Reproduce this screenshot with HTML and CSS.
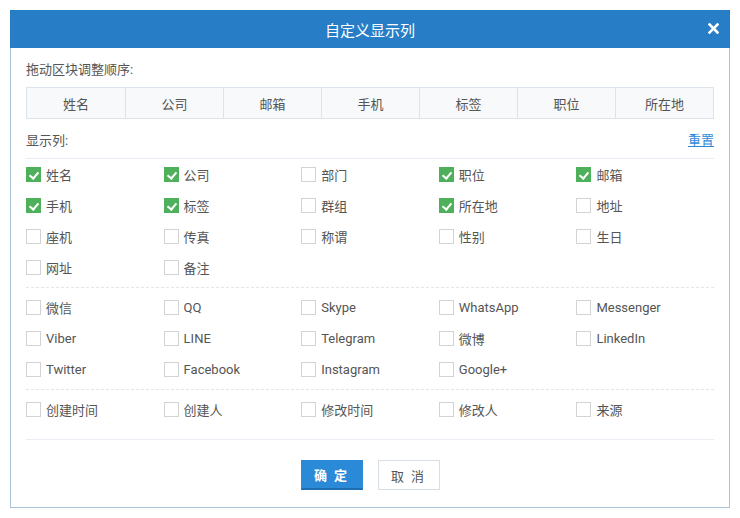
FILE: index.html
```html
<!DOCTYPE html>
<html lang="zh">
<head>
<meta charset="utf-8">
<link rel="stylesheet" href="styles.css">
</head>
<body>
<div class="dialog">
  <div class="dlg-header">
    <span class="dlg-title">自定义显示列</span>
    <span class="dlg-close"><svg width="11" height="11" viewBox="0 0 11 11"><path d="M1.5 1.5L9.5 9.5M9.5 1.5L1.5 9.5" stroke="#fff" stroke-width="2.6" stroke-linecap="square"/></svg></span>
  </div>
  <div class="dlg-body">
    <div class="label">拖动区块调整顺序:</div>
    <div class="sort-strip">
      <div class="sort-cell">姓名</div>
      <div class="sort-cell">公司</div>
      <div class="sort-cell">邮箱</div>
      <div class="sort-cell">手机</div>
      <div class="sort-cell">标签</div>
      <div class="sort-cell">职位</div>
      <div class="sort-cell">所在地</div>
    </div>
    <div class="cols-head">
      <span class="label">显示列:</span>
      <a class="reset">重置</a>
    </div>
    <div class="group first">
      <label class="item"><span class="cb on"></span>姓名</label>
      <label class="item"><span class="cb on"></span>公司</label>
      <label class="item"><span class="cb"></span>部门</label>
      <label class="item"><span class="cb on"></span>职位</label>
      <label class="item"><span class="cb on"></span>邮箱</label>
      <label class="item"><span class="cb on"></span>手机</label>
      <label class="item"><span class="cb on"></span>标签</label>
      <label class="item"><span class="cb"></span>群组</label>
      <label class="item"><span class="cb on"></span>所在地</label>
      <label class="item"><span class="cb"></span>地址</label>
      <label class="item"><span class="cb"></span>座机</label>
      <label class="item"><span class="cb"></span>传真</label>
      <label class="item"><span class="cb"></span>称谓</label>
      <label class="item"><span class="cb"></span>性别</label>
      <label class="item"><span class="cb"></span>生日</label>
      <label class="item"><span class="cb"></span>网址</label>
      <label class="item"><span class="cb"></span>备注</label>
    </div>
    <div class="group">
      <label class="item"><span class="cb"></span>微信</label>
      <label class="item"><span class="cb"></span>QQ</label>
      <label class="item"><span class="cb"></span>Skype</label>
      <label class="item"><span class="cb"></span>WhatsApp</label>
      <label class="item"><span class="cb"></span>Messenger</label>
      <label class="item"><span class="cb"></span>Viber</label>
      <label class="item"><span class="cb"></span>LINE</label>
      <label class="item"><span class="cb"></span>Telegram</label>
      <label class="item"><span class="cb"></span>微博</label>
      <label class="item"><span class="cb"></span>LinkedIn</label>
      <label class="item"><span class="cb"></span>Twitter</label>
      <label class="item"><span class="cb"></span>Facebook</label>
      <label class="item"><span class="cb"></span>Instagram</label>
      <label class="item"><span class="cb"></span>Google+</label>
    </div>
    <div class="group last">
      <label class="item"><span class="cb"></span>创建时间</label>
      <label class="item"><span class="cb"></span>创建人</label>
      <label class="item"><span class="cb"></span>修改时间</label>
      <label class="item"><span class="cb"></span>修改人</label>
      <label class="item"><span class="cb"></span>来源</label>
    </div>
    <div class="footer">
      <button class="btn primary">确 定</button>
      <button class="btn">取 消</button>
    </div>
  </div>
</div>
</body>
</html>
```
FILE: styles.css
```css
* { box-sizing: border-box; }
html, body { margin: 0; padding: 0; background: #fff; }
body {
  font-family: Roboto, "Noto Sans CJK SC", sans-serif;
  font-size: 13px;
  color: #555;
}
.dialog {
  margin: 10px 0 0 10px;
  width: 720px;
  height: 498px;
  border: 1px solid #a9c3dc;
  border-top: none;
  background: #fff;
}
.dlg-header {
  height: 38px;
  margin: 0 -1px;
  background: #277dc6;
  display: flex;
  align-items: center;
  justify-content: center;
  position: relative;
}
.dlg-title {
  color: #fff;
  font-size: 15px;
}
.dlg-close {
  position: absolute;
  right: 11px;
  top: 13px;
  display: flex;
}
.dlg-body {
  padding: 0 15px;
}
.label {
  line-height: 20px;
  color: #555;
}
.dlg-body > .label {
  margin-top: 12px;
}
.sort-strip {
  margin-top: 7px;
  display: grid;
  grid-template-columns: repeat(7, 1fr);
  border: 1px solid #dde3ea;
  background: #f7f9fb;
  height: 32px;
}
.sort-cell {
  display: flex;
  align-items: center;
  justify-content: center;
  border-left: 1px solid #dde3ea;
  color: #555;
}
.sort-cell:first-child { border-left: none; }
.cols-head {
  margin-top: 12px;
  display: flex;
  justify-content: space-between;
  align-items: center;
  padding-bottom: 7px;
  border-bottom: 1px solid #e8eef4;
}
.reset {
  color: #2b8ad8;
  text-decoration: underline;
  line-height: 20px;
  cursor: pointer;
}
.group {
  display: grid;
  grid-template-columns: repeat(5, 1fr);
  grid-auto-rows: 31px;
  padding: 4px 0 4px;
  border-top: 1px dashed #dfe6ee;
}
.group.first {
  border-top: none;
  padding-top: 0;
}
.group.last {
  padding-bottom: 14px;
}
.item {
  display: flex;
  align-items: center;
  gap: 5px;
  color: #555;
  white-space: nowrap;
}
.cb {
  width: 15px;
  height: 15px;
  border: 1px solid #d3d3d3;
  background: #fff;
  flex: none;
  position: relative;
}
.cb.on {
  background: #4fb05c;
  border-color: #4fb05c;
}
.cb.on::after {
  content: "";
  position: absolute;
  left: 4px;
  top: 2px;
  width: 4px;
  height: 7px;
  border: solid #fff;
  border-width: 0 2px 2px 0;
  transform: rotate(40deg);
}
.footer {
  border-top: 1px solid #e8eef4;
  padding-top: 20px;
  display: flex;
  justify-content: center;
  gap: 15px;
}
.btn {
  height: 30px;
  width: 62px;
  font-family: Roboto, "Noto Sans CJK SC", sans-serif;
  font-size: 13px;
  border: 1px solid #d8dee5;
  background: #fff;
  color: #555;
  padding: 0;
  letter-spacing: 2px;
}
.btn.primary {
  background: #2b8ad8;
  border: 1px solid #2b8ad8;
  border-bottom: 2px solid #1d6db0;
  color: #fff;
  font-weight: bold;
}
```
